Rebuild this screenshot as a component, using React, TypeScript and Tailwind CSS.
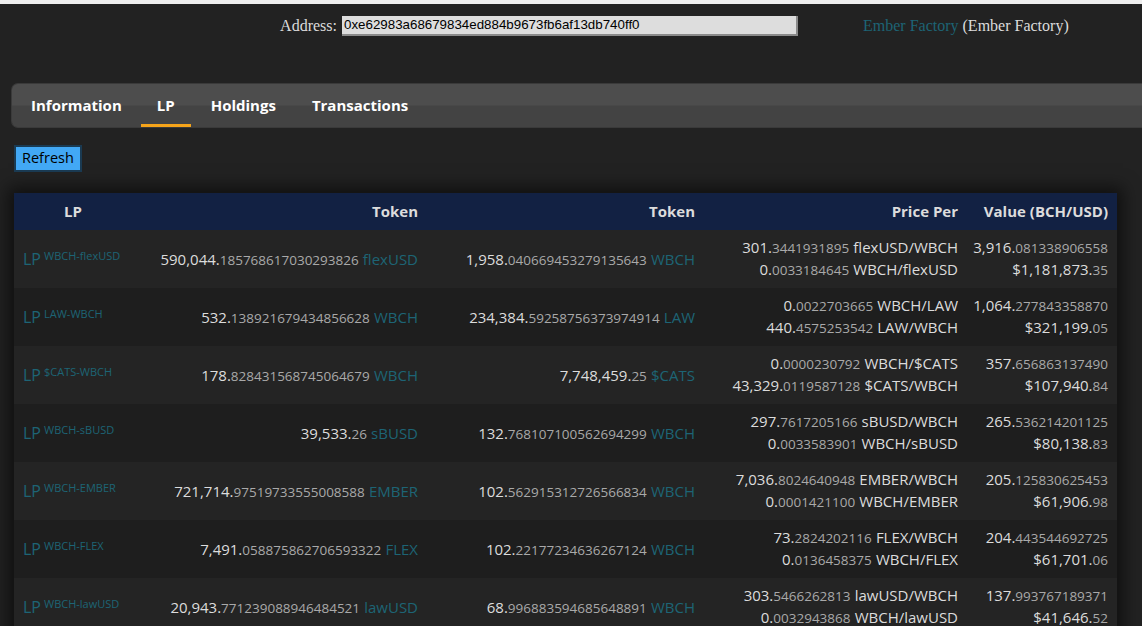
type Num = [string, string]

type Row = {
    pair: string
    a: Num
    aSym: string
    b: Num
    bSym: string
    p1: Num
    p1Pair: string
    p2: Num
    p2Pair: string
    bch: Num
    usd: Num
}

const rows: Row[] = [
    {
        pair: "WBCH-flexUSD",
        a: ["590,044.", "185768617030293826"],
        aSym: "flexUSD",
        b: ["1,958.", "040669453279135643"],
        bSym: "WBCH",
        p1: ["301.", "3441931895"],
        p1Pair: "flexUSD/WBCH",
        p2: ["0.", "0033184645"],
        p2Pair: "WBCH/flexUSD",
        bch: ["3,916.", "081338906558"],
        usd: ["$1,181,873.", "35"],
    },
    {
        pair: "LAW-WBCH",
        a: ["532.", "138921679434856628"],
        aSym: "WBCH",
        b: ["234,384.", "59258756373974914"],
        bSym: "LAW",
        p1: ["0.", "0022703665"],
        p1Pair: "WBCH/LAW",
        p2: ["440.", "4575253542"],
        p2Pair: "LAW/WBCH",
        bch: ["1,064.", "277843358870"],
        usd: ["$321,199.", "05"],
    },
    {
        pair: "$CATS-WBCH",
        a: ["178.", "828431568745064679"],
        aSym: "WBCH",
        b: ["7,748,459.", "25"],
        bSym: "$CATS",
        p1: ["0.", "0000230792"],
        p1Pair: "WBCH/$CATS",
        p2: ["43,329.", "0119587128"],
        p2Pair: "$CATS/WBCH",
        bch: ["357.", "656863137490"],
        usd: ["$107,940.", "84"],
    },
    {
        pair: "WBCH-sBUSD",
        a: ["39,533.", "26"],
        aSym: "sBUSD",
        b: ["132.", "768107100562694299"],
        bSym: "WBCH",
        p1: ["297.", "7617205166"],
        p1Pair: "sBUSD/WBCH",
        p2: ["0.", "0033583901"],
        p2Pair: "WBCH/sBUSD",
        bch: ["265.", "536214201125"],
        usd: ["$80,138.", "83"],
    },
    {
        pair: "WBCH-EMBER",
        a: ["721,714.", "97519733555008588"],
        aSym: "EMBER",
        b: ["102.", "562915312726566834"],
        bSym: "WBCH",
        p1: ["7,036.", "8024640948"],
        p1Pair: "EMBER/WBCH",
        p2: ["0.", "0001421100"],
        p2Pair: "WBCH/EMBER",
        bch: ["205.", "125830625453"],
        usd: ["$61,906.", "98"],
    },
    {
        pair: "WBCH-FLEX",
        a: ["7,491.", "058875862706593322"],
        aSym: "FLEX",
        b: ["102.", "22177234636267124"],
        bSym: "WBCH",
        p1: ["73.", "2824202116"],
        p1Pair: "FLEX/WBCH",
        p2: ["0.", "0136458375"],
        p2Pair: "WBCH/FLEX",
        bch: ["204.", "443544692725"],
        usd: ["$61,701.", "06"],
    },
    {
        pair: "WBCH-lawUSD",
        a: ["20,943.", "771239088946484521"],
        aSym: "lawUSD",
        b: ["68.", "996883594685648891"],
        bSym: "WBCH",
        p1: ["303.", "5466262813"],
        p1Pair: "lawUSD/WBCH",
        p2: ["0.", "0032943868"],
        p2Pair: "WBCH/lawUSD",
        bch: ["137.", "993767189371"],
        usd: ["$41,646.", "52"],
    },
]

// integer part bright, decimals dimmer and smaller
const Amount = ({ n }: { n: Num }) => (
    <>
        <span className="text-[15px] text-[#dcdcdc]">{n[0]}</span>
        <span className="text-[13.5px] text-[#a9a9a9]">{n[1]}</span>
    </>
)

const tabs = ["Information", "LP", "Holdings", "Transactions"]

const App = () => {
    return (
        <div
            className="min-h-screen bg-[#222222] text-[#dcdcdc]"
            style={{ fontFamily: '"Open Sans", "Noto Sans", sans-serif' }}
        >
            <div className="h-[4px] bg-[#efefef]" />

            <div className="flex h-[44px] items-center">
                <div className="flex w-[798px] items-center justify-end">
                    <span className="mr-[5px] font-['Liberation_Serif',serif] text-[16px] text-[#dcdcdc]">
                        Address:
                    </span>
                    <div className="flex h-[20px] w-[456px] items-center border-r-2 border-b-2 border-[#8a8a8a] bg-[#dddddd] pl-[2px] font-['Liberation_Sans',sans-serif] text-[13.33px] text-black">
                        0xe62983a68679834ed884b9673fb6af13db740ff0
                    </div>
                </div>
                <div className="ml-[65px] font-['Liberation_Serif',serif] text-[16px]">
                    <span className="text-[#1d6475]">Ember Factory</span>{" "}
                    <span className="text-[#dcdcdc]">(Ember Factory)</span>
                </div>
            </div>

            <div className="mt-[35px] ml-[11px] flex h-[45px] items-stretch gap-[3px] rounded-l-[7px] border border-r-0 border-[#3a3a3a] bg-[linear-gradient(to_bottom,#4d4d4d_0%,#4d4d4d_48%,#434343_52%,#434343_100%)] pl-[3px]">
                {tabs.map((t) => (
                    <div
                        key={t}
                        className={`flex items-center px-[16px] text-[15px] font-bold text-white ${
                            t === "LP" ? "border-b-[3px] border-[#f5a41a] pt-[3px]" : ""
                        } ${t === "Holdings" || t === "Transactions" ? "ml-[1px]" : ""}`}
                    >
                        {t}
                    </div>
                ))}
            </div>

            <div className="mt-[17px] ml-[14px]">
                <button
                    type="button"
                    className="h-[27px] border-2 border-[#1a3a52] bg-[#42a8f5] px-[6px] text-[14.5px] leading-none text-black"
                >
                    Refresh
                </button>
            </div>

            <div className="mt-[21px] ml-[14px] w-[1103px] shadow-[0_0_16px_6px_rgba(0,0,0,0.55)]">
                <table className="w-full table-fixed border-collapse">
                    <colgroup>
                        <col className="w-[118px]" />
                        <col className="w-[295px]" />
                        <col className="w-[277px]" />
                        <col className="w-[263px]" />
                        <col className="w-[150px]" />
                    </colgroup>
                    <thead>
                        <tr className="h-[37px] bg-[#122143] text-[15px] font-bold text-[#dcdcdc]">
                            <th className="text-center">LP</th>
                            <th className="pr-[9px] text-right">Token</th>
                            <th className="pr-[9px] text-right">Token</th>
                            <th className="pr-[9px] text-right">Price Per</th>
                            <th className="pr-[9px] text-right">Value (BCH/USD)</th>
                        </tr>
                    </thead>
                    <tbody>
                        {rows.map((r, i) => (
                            <tr
                                key={r.pair}
                                className={`h-[58px] ${i % 2 === 0 ? "bg-[#242424]" : "bg-[#1e1e1e]"}`}
                            >
                                <td className="pl-[9px] text-left text-[#1d6475]">
                                    <span className="text-[16px]">LP</span>
                                    <sup className="ml-[3px] text-[11px]">{r.pair}</sup>
                                </td>
                                <td className="pr-[9px] text-right whitespace-nowrap">
                                    <Amount n={r.a} /> <span className="text-[15px] text-[#1d6475]">{r.aSym}</span>
                                </td>
                                <td className="pr-[9px] text-right whitespace-nowrap">
                                    <Amount n={r.b} /> <span className="text-[15px] text-[#1d6475]">{r.bSym}</span>
                                </td>
                                <td className="pr-[9px] text-right leading-[21px] whitespace-nowrap">
                                    <div>
                                        <Amount n={r.p1} /> <span className="text-[15px]">{r.p1Pair}</span>
                                    </div>
                                    <div>
                                        <Amount n={r.p2} /> <span className="text-[15px]">{r.p2Pair}</span>
                                    </div>
                                </td>
                                <td className="pr-[9px] text-right leading-[21px] whitespace-nowrap">
                                    <div>
                                        <Amount n={r.bch} />
                                    </div>
                                    <div>
                                        <Amount n={r.usd} />
                                    </div>
                                </td>
                            </tr>
                        ))}
                    </tbody>
                </table>
            </div>
        </div>
    )
}

export default App
